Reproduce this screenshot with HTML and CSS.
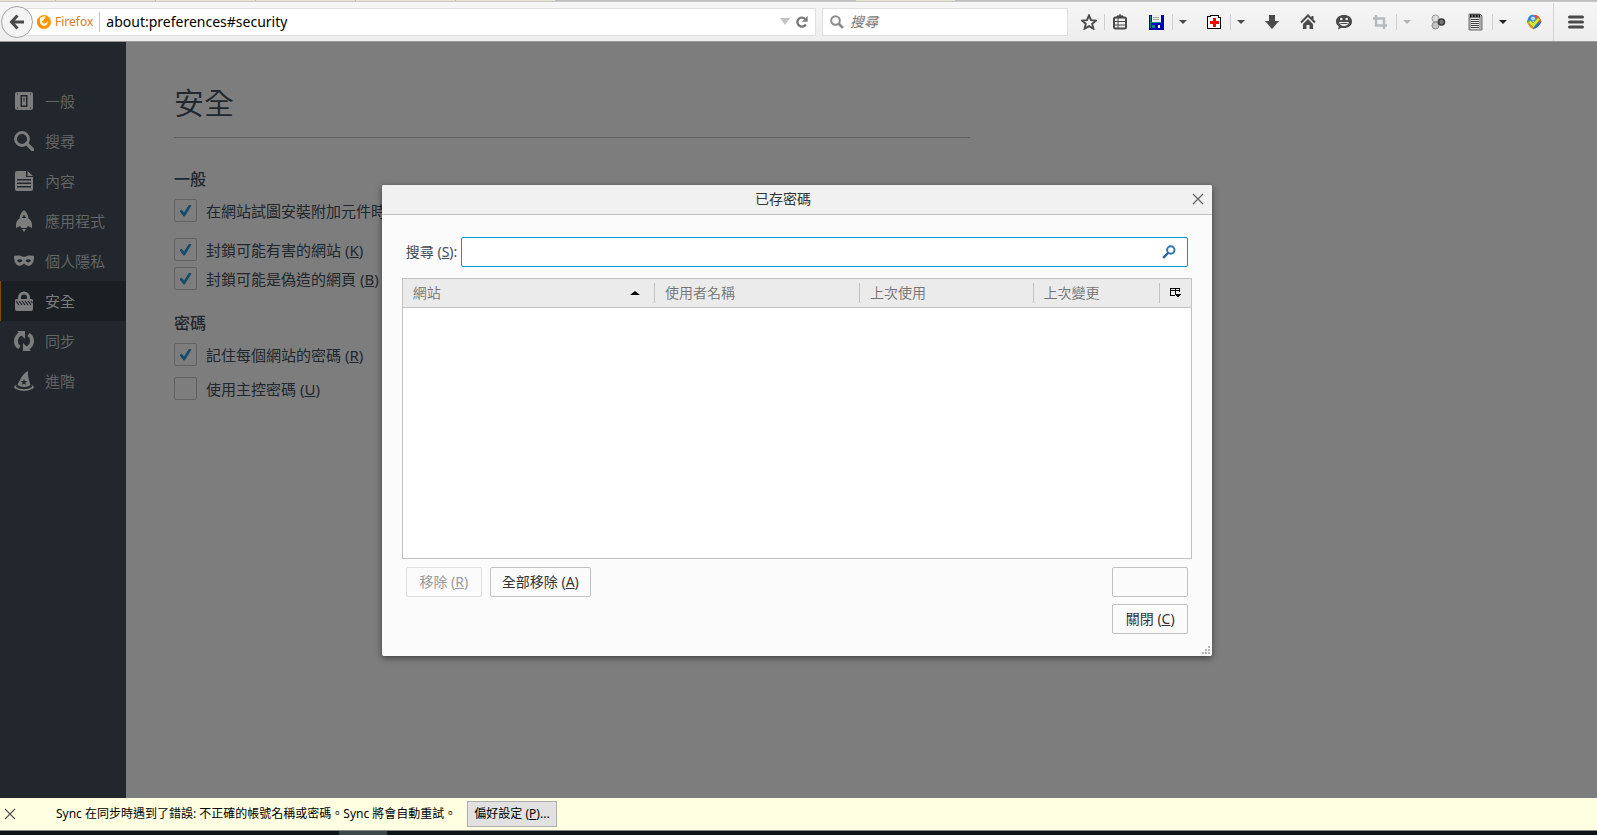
FILE: index.html
```
<!DOCTYPE html>
<html lang="zh-Hant">
<head>
    <meta charset="UTF-8">
    <meta name="viewport" content="width=device-width, initial-scale=1.0">
    <title>安全</title>
    <link rel="stylesheet" href="styles.css">
</head>
<body>
    <div class="tabstrip"><span class="tab first"></span><span class="tab"></span><span class="tab"></span><span class="tab"></span><span class="tab"></span><span class="tab"></span><span class="tab-gap"></span><span class="tab"></span></div>
    <header class="toolbar">
        <button class="back" aria-label="Back">
            <svg width="16" height="16" viewBox="0 0 16 16"><path d="M8.5 1.5 2.5 8l6 6.500M3 8h12" fill="none" stroke="#4a4a4a" stroke-width="3"/></svg>
        </button>
        <div class="urlbar">
            <svg width="14" height="14" viewBox="0 0 14 14"><circle cx="7" cy="7" r="7" fill="#ff9500"/><path d="M3 2.500 5 2c1-1 3-1 4 0-1 .3-1.500 1-1.300 1.700L6.500 5 5 6.500C5.500 8.500 8 9 9.500 7.500L10.500 6c.8 2.500-1 5-3.500 5S2.500 9 2.500 6.500z" fill="#fff3dc"/><path d="M1 3.200 2.800 5C2.300 7.800 3.300 10 5.800 10.900L5 13.600A7 7 0 0 1 .3 5.200z" fill="#ff8a00"/></svg>
            <span class="identity">Firefox</span>
            <input class="url" type="text" value="about:preferences#security" aria-label="Location">
            <span class="history"></span>
            <button class="reload" aria-label="Reload">
                <svg width="12" height="12" viewBox="0 0 12 12"><path d="M9 2.800A4.500 4.500 0 1 0 9.800 8.400" fill="none" stroke="#7a7a7a" stroke-width="2.400"/><path d="M11.700 0v5.700H6z" fill="#7a7a7a"/></svg>
            </button>
        </div>
        <div class="searchbar">
            <svg width="14" height="14" viewBox="0 0 14 14"><circle cx="5.500" cy="5.500" r="4.300" fill="none" stroke="#8c8c8c" stroke-width="2"/><path d="m8.500 8.500 4.500 4.500" stroke="#8c8c8c" stroke-width="2.600"/></svg>
            <input type="text" placeholder="搜尋" aria-label="搜尋">
        </div>
        <div class="tools">
            <button class="tool star" aria-label="Bookmark">
                <svg width="16" height="16" viewBox="0 0 16 16"><path d="m8 1.500 2 4.600 5 .4-3.800 3.300 1.200 4.900L8 12.100l-4.400 2.600 1.200-4.900L1 6.500l5-.4z" fill="none" stroke="#4a4a4a" stroke-width="1.900"/></svg>
            </button>
            <button class="tool list" aria-label="Bookmarks menu">
                <svg width="16" height="16" viewBox="0 0 16 16"><path d="M5 3V2h1.500L8 .5 9.500 2H11v1" fill="#4a4a4a" stroke="#4a4a4a"/><rect x="2" y="3.500" width="12" height="11" rx="1.500" fill="none" stroke="#4a4a4a" stroke-width="2"/><path d="M2 3.600h12M2 7.500h12M2 11h12M6 4v10" stroke="#4a4a4a"/></svg>
            </button>
            <button class="tool main" aria-label="Save">
                <svg width="16" height="16" viewBox="0 0 16 16" shape-rendering="crispEdges"><path d="M1 1h14v14H2l-1-1z" fill="#00b"/><path d="M1 1h14v14H1z" fill="none" stroke="#00009a"/><path d="M2 2h1v12H2zM3 8h10v1H3zM4 11h3v3H4z" fill="#088"/><path d="M4 1h9v7H4z" fill="#eee"/><path d="M5 3h6M5 5.500h6" stroke="#aaa"/><path d="M10 11h2v3h-2z" fill="#fff"/></svg>
            </button>
            <button class="tool drop" aria-label="Save options"><span class="arrow"></span></button>
            <button class="tool main" aria-label="Medical">
                <svg width="16" height="16" viewBox="0 0 16 16" shape-rendering="crispEdges"><path d="M2 2h2V1h8v2h2v11.500H1.500V2z" fill="#fff" stroke="#000"/><path d="M6.500 4h3v3h3v3h-3v3h-3v-3h-3V7h3z" fill="#f00"/></svg>
            </button>
            <button class="tool drop" aria-label="Options"><span class="arrow"></span></button>
            <button class="tool" aria-label="Downloads">
                <svg width="16" height="16" viewBox="0 0 16 16"><path d="M5 1h6v6h4l-7 8-7-8h4z" fill="#4a4a4a"/></svg>
            </button>
            <button class="tool" aria-label="Home">
                <svg width="16" height="16" viewBox="0 0 16 16"><path d="m1 8.500 7-7 7 7M12.500 2v3.500" fill="none" stroke="#4a4a4a" stroke-width="2"/><path d="m8 5 5 5v5H9.500v-4h-3v4H3v-5z" fill="#4a4a4a"/></svg>
            </button>
            <button class="tool" aria-label="Chat">
                <svg width="16" height="16" viewBox="0 0 16 16"><path d="M8 1c4.500 0 8 2.600 8 6.500S12.500 14 8 14c-1 0-1.700 0-2.500-.3L2 15.500l.8-3.200C1 11 0 9.500 0 7.500 0 3.600 3.500 1 8 1z" fill="#4a4a4a"/><circle cx="5.300" cy="5" r="1.300" fill="#f1f1f1"/><circle cx="10.700" cy="5" r="1.300" fill="#f1f1f1"/><path d="M3 8h10c-.5 2.600-2.500 4-5 4s-4.500-1.400-5-4z" fill="#f1f1f1"/><path d="M4.500 9.500h7" stroke="#4a4a4a"/></svg>
            </button>
            <button class="tool main" aria-label="Crop">
                <svg width="16" height="16" viewBox="0 0 16 16"><path d="M4 1v10.500h11M1 4.500h11V15" fill="none" stroke="#b5babf" stroke-width="2.400"/></svg>
            </button>
            <button class="tool drop" aria-label="Crop options"><span class="arrow light"></span></button>
            <button class="tool" aria-label="Extension">
                <svg width="16" height="16" viewBox="0 0 16 16"><circle cx="5.500" cy="4.500" r="3.500" fill="#ddd" stroke="#999"/><circle cx="5.500" cy="11.500" r="3.500" fill="#c4c4c4" stroke="#888"/><circle cx="11.500" cy="8" r="3" fill="#777" stroke="#3c3c3c" stroke-width="1.600"/></svg>
            </button>
            <button class="tool main" aria-label="Script">
                <svg width="18" height="18" viewBox="0 0 18 18"><path d="M3 1h11l2 2v14H3z" fill="#aaa" stroke="#777"/><path d="M5 4h8v12H5z" fill="#e8e8e8"/><path d="M4 1.500h10v3H4z" fill="#111"/><path d="M5.500 3h1.500M8.500 3H10M11.500 3H13" stroke="#ccc"/><path d="M5 6.500h8M5 8.500h8M5 10.500h8M5 12.500h8M5 14.500h8" stroke="#444"/></svg>
            </button>
            <button class="tool drop" aria-label="Script options"><span class="arrow dark"></span></button>
            <button class="tool" aria-label="Web safety">
                <svg width="16" height="16" viewBox="0 0 16 16"><path d="M8 1C4 0 2 3 1 8l4 5z" fill="#2f86d8"/><path d="M8 1c4-.5 6 2 7.500 7L12 12 8 8z" fill="#e5532d"/><path d="M1 8c1 3 4 7 7 7.500L7 10z" fill="#f08a24"/><path d="M7 15c4 0 7-4 8.500-8L9 11z" fill="#236fc0"/><circle cx="7" cy="4.500" r="2.500" fill="#b9dcf8" stroke="#2f86d8"/><path d="m1.500 8 3-1.500L7 9l5-5.500 2 2L7.500 13.500z" fill="#d3e83c" stroke="#7aa12a" stroke-width=".7"/></svg>
            </button>
            <button class="tool menu" aria-label="Menu">
                <svg width="16" height="14" viewBox="0 0 16 14"><path d="M1.500 2h13M1.500 7h13M1.500 12h13" stroke="#4a4a4a" stroke-width="3" stroke-linecap="round"/></svg>
            </button>
        </div>
    </header>

    <div class="content">
        <nav class="categories">
            <a class="category" href="#general">
                <svg width="20" height="20" viewBox="0 0 20 20"><path fill-rule="evenodd" d="M3 1h14a2 2 0 0 1 2 2v14a2 2 0 0 1-2 2H3a2 2 0 0 1-2-2V3a2 2 0 0 1 2-2zM6.500 4v12h7V4zM3 2.500v1h1v-1zM16 2.500v1h1v-1zM3 16.500v1h1v-1zM16 16.500v1h1v-1z"/><path d="M8 5.500h4v9H8z"/><path d="M9.500 6.500h1v4h-1z" fill="#424f5a"/></svg>
                一般
            </a>
            <a class="category" href="#search">
                <svg width="20" height="20" viewBox="0 0 20 20"><circle cx="8" cy="8" r="6.500" fill="none" stroke="#fbfbfb" stroke-width="2.800"/><path d="m12.500 12.500 6 6" stroke="#fbfbfb" stroke-width="3.200" stroke-linecap="round"/></svg>
                搜尋
            </a>
            <a class="category" href="#content">
                <svg width="20" height="20" viewBox="0 0 20 20"><path fill-rule="evenodd" d="M3 0h9v6h7v12a2 2 0 0 1-2 2H3a2 2 0 0 1-2-2V2a2 2 0 0 1 2-2zM3 8v1.500h14V8zM3 11.500V13h14v-1.500zM3 15v1.500h14V15zM13.500 0 19 5h-5.500z"/></svg>
                內容
            </a>
            <a class="category" href="#applications">
                <svg width="20" height="22" viewBox="0 0 20 22"><path fill-rule="evenodd" d="M10 0c2.500 2 4.300 5 4.500 8.500 2.500 1.500 3.500 4 3.500 6.500v3l-4-2-1.500 2h-5L6 16l-4 2v-3c0-2.500 1-5 3.500-6.500C5.700 5 7.500 2 10 0zm0 4.500L8 8h4z"/><path d="M8 19h4l-2 3z"/></svg>
                應用程式
            </a>
            <a class="category" href="#privacy">
                <svg width="20" height="20" viewBox="0 0 20 20"><path fill-rule="evenodd" d="M0 5c3-1 7-.7 10 1 3-1.700 7-2 10-1 .2 4-1 9-5 9.800-2.500.4-3.500-1.300-5-2.300-1.500 1-2.500 2.700-5 2.300C1 14 0 9 0 5zm3 4.500c1.500 2.500 4 2.500 5.500 0C7 7.700 4.500 7.700 3 9.500zm8.500 0c1.500 2.500 4 2.500 5.500 0-1.500-1.800-4-1.800-5.500 0z"/></svg>
                個人隱私
            </a>
            <a class="category selected" href="#security">
                <svg width="20" height="20" viewBox="0 0 20 20"><path d="M5.500 9V6.500a4.500 4.500 0 0 1 9 0V9" fill="none" stroke="#fbfbfb" stroke-width="3"/><path d="M2 8h16l1 1v9a2 2 0 0 1-2 2H3a2 2 0 0 1-2-2V9z"/><path d="m2 10 3 4M5 10l3 4M8 10l3 4M11 10l3 4M14 10l3 4M17 10l1.500 2" stroke="#343f48" stroke-width="1.200"/></svg>
                安全
            </a>
            <a class="category" href="#sync">
                <svg width="20" height="20" viewBox="0 0 20 20"><path d="M7.500 2.500C1 5 0 13 5.500 16.500M12.500 17.500C19 15 20 7 14.500 3.500" fill="none" stroke="#fbfbfb" stroke-width="3.800"/><path d="M3 0h8v8zM17 20H9v-8z"/></svg>
                同步
            </a>
            <a class="category" href="#advanced">
                <svg width="20" height="20" viewBox="0 0 20 20"><path d="M14 0c-.5 5 1 9 2.500 14-3.500 2.500-9 2.500-13 0C6 9 8 3 14 0z"/><path d="M2.500 14C-1 15 0 17 2 18c5 2.500 11 2.500 16 0 2-1 3-3-.5-4l.5 2c-5 3-11 3-16 0z"/><path d="m10 8 .9 2.100 2.300.2-1.700 1.500.5 2.200-2-1.200L8 14l.5-2.200-1.700-1.500 2.300-.2z" fill="#424f5a"/></svg>
                進階
            </a>
        </nav>
        <main class="pane">
            <h1>安全</h1>
            <section class="group">
                <h2>一般</h2>
                <label class="check"><input type="checkbox" checked>在網站試圖安裝附加元件時警告</label>
                <label class="check spaced"><input type="checkbox" checked><span>封鎖可能有害的網站 (<u>K</u>)</span></label>
                <label class="check close"><input type="checkbox" checked><span>封鎖可能是偽造的網頁 (<u>B</u>)</span></label>
            </section>
            <section class="group">
                <h2>密碼</h2>
                <label class="check"><input type="checkbox" checked><span>記住每個網站的密碼 (<u>R</u>)</span></label>
                <label class="check"><input type="checkbox"><span>使用主控密碼 (<u>U</u>)</span></label>
            </section>
        </main>

        <div class="overlay">
            <div class="dialog" role="dialog" aria-labelledby="dialogTitle">
                <div class="titlebar">
                    <span id="dialogTitle" class="dialog-title">已存密碼</span>
                    <button class="dialog-close" aria-label="Close">
                        <svg width="12" height="12" viewBox="0 0 12 12"><path d="m1 1 10 10M11 1 1 11" stroke="#666" stroke-width="1.300"/></svg>
                    </button>
                </div>
                <div class="dialog-body">
                    <div class="filter">
                        <label for="filter">搜尋 (<u>S</u>):</label>
                        <div class="filter-box">
                            <input type="text" id="filter">
                            <svg width="14" height="14" viewBox="0 0 14 14"><circle cx="8.800" cy="5" r="3.700" fill="none" stroke="#2f74b5" stroke-width="2"/><path d="M6 8 1.200 12.800" stroke="#2a5f9e" stroke-width="2.400"/></svg>
                        </div>
                    </div>
                    <div class="tree">
                        <table>
                            <thead>
                                <tr>
                                    <th class="col-site"><div class="head">網站<span class="sort"></span></div></th>
                                    <th class="col-user"><div class="head">使用者名稱</div></th>
                                    <th class="col-used"><div class="head">上次使用</div></th>
                                    <th class="col-changed"><div class="head">上次變更</div></th>
                                    <th class="col-picker">
                                        <button class="picker" aria-label="Columns">
                                            <svg width="11" height="11" viewBox="0 0 11 11" shape-rendering="crispEdges"><path d="M5 8.500H.5v-7h9V5M0 3.500h10M5 2v6" fill="none" stroke="#000"/><path d="M5 7h6L8 11z"/></svg>
                                        </button>
                                    </th>
                                </tr>
                            </thead>
                            <tbody></tbody>
                        </table>
                    </div>
                    <div class="actions">
                        <button class="button" disabled>移除 (<u>R</u>)</button>
                        <button class="button">全部移除 (<u>A</u>)</button>
                        <button class="button blank" aria-label="Show passwords"></button>
                    </div>
                    <div class="actions end">
                        <button class="button">關閉 (<u>C</u>)</button>
                    </div>
                </div>
                <svg class="resizer" width="9" height="9" viewBox="0 0 9 9" shape-rendering="crispEdges"><path d="M6 0h2v2H6zM3 3h2v2H3zM6 3h2v2H6zM0 6h2v2H0zM3 6h2v2H3zM6 6h2v2H6z" fill="#b8b8b8"/></svg>
            </div>
        </div>
    </div>

    <footer class="notification">
        <button class="dismiss" aria-label="Dismiss">
            <svg width="12" height="12" viewBox="0 0 12 12"><path d="m1 1 10 10M11 1 1 11" stroke="#555" stroke-width="1.200"/></svg>
        </button>
        <span class="message">Sync 在同步時遇到了錯誤: 不正確的帳號名稱或密碼。Sync 將會自動重試。</span>
        <button class="prefs">偏好設定 (<u>P</u>)...</button>
    </footer>
    <div class="taskbar"><span class="task"></span></div>
</body>
</html>
```

FILE: styles.css
```
* {
    box-sizing: border-box;
}
body {
    margin: 0;
    height: 100vh;
    display: flex;
    flex-direction: column;
    overflow: hidden;
    font-family: "Noto Sans", "Noto Sans CJK TC", sans-serif;
    font-size: 14px;
    line-height: 20px;
    color: #333;
}
button, input {
    font: inherit;
    color: inherit;
    margin: 0;
    padding: 0;
    border: none;
    background: none;
}
svg {
    flex: none;
    display: block;
}

/* browser chrome */
.tabstrip {
    display: flex;
    height: 1px;
    background: #bdbdbd;
}
.tab {
    flex: none;
    width: 99px;
    margin-right: 1px;
    background: #e9e4cf;
}
.tab.first {
    width: 55px;
}
.tab-gap {
    flex: none;
    width: 300px;
}
.toolbar {
    display: flex;
    align-items: center;
    height: 41px;
    border-top: 1px solid #c8c8c8;
    border-bottom: 1px solid #999;
    background: linear-gradient(#f6f6f6, #ededed);
}
.back {
    flex: none;
    display: flex;
    align-items: center;
    justify-content: center;
    width: 32px;
    height: 32px;
    margin-left: 1px;
    border: 1px solid #a5a5a5;
    border-radius: 50%;
    background: #f4f4f4;
    z-index: 1;
}
.urlbar {
    flex: 1;
    display: flex;
    align-items: center;
    height: 28px;
    margin-left: -16px;
    padding: 0 7px 0 19px;
    border: 1px solid #e0e0e0;
    background: #fff;
}
.identity {
    margin-left: 4px;
    padding-right: 6px;
    border-right: 1px solid #f2b683;
    font-size: 12px;
    color: #e07b1a;
}
.url {
    flex: 1;
    margin-left: 6px;
    color: #000;
}
.history {
    border: 5px solid transparent;
    border-top: 7px solid #c4c4c4;
    border-bottom: none;
}
.reload {
    margin-left: 6px;
}
.searchbar {
    display: flex;
    align-items: center;
    width: 246px;
    height: 28px;
    margin: 0 6px;
    padding: 0 7px;
    border: 1px solid #e0e0e0;
    background: #fff;
}
.searchbar input {
    width: 100%;
    margin-left: 6px;
}
.searchbar input::placeholder {
    font-style: italic;
    color: #777;
}
.tools {
    display: flex;
    align-items: center;
}
.tool {
    display: flex;
    align-items: center;
    justify-content: center;
    width: 36px;
    height: 16px;
}
.star {
    width: 30px;
}
.list {
    width: 34px;
    padding-right: 3px;
    border-left: 1px solid #ccd0d6;
}
.main {
    width: auto;
    padding: 0 8px 0 10px;
}
.drop {
    width: 24px;
    padding-right: 4px;
    border-left: 1px solid #ccd0d6;
}
.arrow {
    border: 4px solid transparent;
    border-top-color: #4a4a4a;
    border-bottom: none;
}
.light {
    border-top-color: #b5b5b5;
}
.dark {
    border-top-color: #222;
}
.menu {
    width: 44px;
    height: 38px;
    margin-left: 1px;
    border-left: 1px solid #d4d4d4;
}

/* preferences */
.content {
    position: relative;
    flex: 1;
    display: flex;
    min-height: 0;
    background: #fbfbfb;
}
.categories {
    width: 126px;
    padding-top: 39px;
    background: #424f5a;
}
.category {
    display: flex;
    align-items: center;
    gap: 11px;
    height: 40px;
    padding-left: 13px;
    border-left: 1px solid transparent;
    font-size: 15px;
    font-weight: 350;
    color: #ccc;
    text-decoration: none;
}
.category svg {
    fill: #fbfbfb;
}
.selected {
    border-left-color: #ff9500;
    background: #343f48;
    color: #fbfbfb;
}
.pane {
    flex: 1;
    max-width: 844px;
    padding: 38px 0 0 48px;
    color: #424e5a;
}
h1 {
    margin: 0;
    padding-bottom: 12px;
    border-bottom: 1px solid #c1c1c1;
    font-size: 30px;
    font-weight: 350;
    line-height: 45px;
    color: #424e5a;
}
.group {
    margin-top: 28px;
}
.group + .group {
    margin-top: 20px;
}
h2 {
    margin: 0;
    font-size: 16px;
    font-weight: 500;
    line-height: 26px;
}
.check {
    display: flex;
    align-items: center;
    gap: 9px;
    height: 23px;
    margin-top: 7px;
    margin-bottom: 11px;
    font-size: 15px;
}
.check.spaced {
    margin: 16px 0 0;
}
.check.close {
    margin: 6px 0 0;
}
.check input {
    appearance: none;
    display: flex;
    align-items: center;
    justify-content: center;
    width: 23px;
    height: 23px;
    border: 1px solid #c1c1c1;
    border-radius: 2px;
    background: #fbfbfb;
}
.check input:checked::before {
    content: "";
    width: 12px;
    height: 12px;
    background: #2a96d8;
    clip-path: polygon(0 56%, 16% 42%, 38% 66%, 80% 0, 100% 8%, 44% 100%, 34% 100%);
}

/* saved passwords dialog */
.overlay {
    position: absolute;
    inset: 0;
    display: flex;
    align-items: center;
    justify-content: center;
    background: rgba(0, 0, 0, 0.5);
}
.dialog {
    position: relative;
    width: 52%;
    margin-right: 3px;
    border-radius: 2px;
    background: #fbfbfb;
    box-shadow: 0 2px 6px rgba(0, 0, 0, 0.5);
    color: #424e5a;
}
.titlebar {
    display: flex;
    align-items: center;
    height: 30px;
    border-bottom: 1px solid #c1c1c1;
    border-radius: 2px 2px 0 0;
    background: #f1f1f1;
}
.dialog-title {
    flex: 1;
    text-align: center;
    color: #333;
}
.dialog-close {
    padding: 8px;
}
.dialog-body {
    padding: 22px 20px;
}
.filter {
    display: flex;
    align-items: center;
    gap: 4px;
    padding: 0 4px;
}
.filter-box {
    flex: 1;
    display: flex;
    align-items: center;
    height: 30px;
    padding: 0 11px;
    border: 1px solid #0095dd;
    border-radius: 2px;
    background: #fff;
}
.filter-box input {
    flex: 1;
    outline: none;
}
.tree {
    min-height: 281px;
    margin-top: 11px;
    border: 1px solid #c1c1c1;
    background: #fff;
}
table {
    width: 100%;
    table-layout: fixed;
    border-collapse: collapse;
}
th {
    height: 29px;
    padding: 0;
    border-bottom: 1px solid #c1c1c1;
    background: #ebebeb;
    font-weight: 350;
    color: #737373;
    text-align: left;
}
.head {
    display: flex;
    align-items: center;
    justify-content: space-between;
    height: 20px;
    padding: 0 14px 0 10px;
    border-right: 1px solid #c1c1c1;
}
.col-site {
    width: 32%;
}
.col-user {
    width: 26%;
}
.col-used {
    width: 22%;
}
.col-changed {
    width: 16%;
}
.sort {
    border: 5px solid transparent;
    border-top: none;
    border-bottom-color: #000;
    border-bottom-width: 4px;
}
.picker {
    display: flex;
    justify-content: center;
    width: 100%;
}
.actions {
    display: flex;
    gap: 8px;
    margin-top: 8px;
    padding: 0 4px;
}
.button {
    min-width: 76px;
    height: 30px;
    padding: 0 11px;
    border: 1px solid #c1c1c1;
    border-radius: 2px;
    background: #fbfbfb;
    color: #333;
}
.button:disabled {
    border-color: #dedede;
    color: #999;
}
.blank {
    margin-left: auto;
}
.end {
    justify-content: flex-end;
    margin-top: 7px;
}
.resizer {
    position: absolute;
    right: 1px;
    bottom: 1px;
}

/* sync notification */
.notification {
    display: flex;
    align-items: center;
    height: 33px;
    border-bottom: 1px solid #888;
    background: #ffffe1;
    font-size: 12px;
    color: #000;
}
.dismiss {
    margin-left: 4px;
}
.message {
    margin-left: 40px;
}
.prefs {
    height: 26px;
    margin-left: 11px;
    padding: 0 6px;
    border: 1px solid #adadad;
    background: #e1e1e1;
}
.taskbar {
    height: 4px;
    padding-left: 339px;
    background: #0c1419;
}
.task {
    display: block;
    width: 48px;
    height: 4px;
    background: #3c474b;
}
```
